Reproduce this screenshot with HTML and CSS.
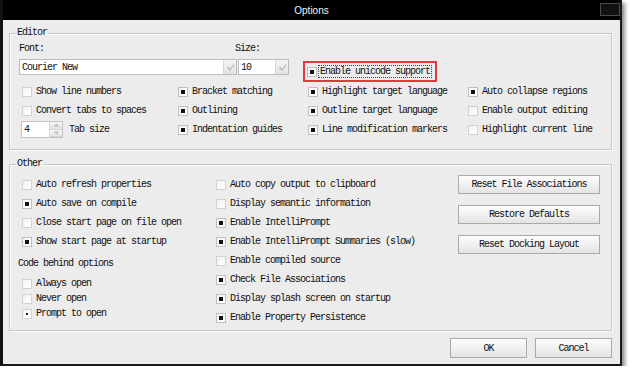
FILE: index.html
```html
<!DOCTYPE html>
<html lang="en">

<head>
    <meta charset="UTF-8">
    <title>Options</title>
    <link rel="stylesheet" href="styles.css">
</head>

<body>
    <div class="window">
        <div class="titlebar">
            <span></span>
            <span class="title">Options</span>
            <span class="close-btn"></span>
        </div>

        <div class="content">
            <fieldset class="group">
                <legend>Editor</legend>
                <div class="editor-body">
                    <div class="top-row">
                        <div class="field font-field">
                            <span class="label">Font:</span>
                            <div class="combo">
                                <span class="combo-text">Courier New</span>
                                <span class="combo-arrow"><svg width="9" height="9" viewBox="0 0 9 9"><polyline points="1.5,4 4,7 8,1.5" fill="none" stroke="#b5b5b5" stroke-width="1.2"/></svg></span>
                            </div>
                        </div>
                        <div class="field size-field">
                            <span class="label size-label">Size:</span>
                            <div class="combo">
                                <span class="combo-text">10</span>
                                <span class="combo-arrow"><svg width="9" height="9" viewBox="0 0 9 9"><polyline points="1.5,4 4,7 8,1.5" fill="none" stroke="#b5b5b5" stroke-width="1.2"/></svg></span>
                            </div>
                        </div>
                        <div class="highlight">
                            <span class="cb on"></span>
                            <span class="focus-text">Enable unicode support</span>
                        </div>
                    </div>

                    <div class="editor-grid">
                        <div class="row"><span class="cb"></span>Show line numbers</div>
                        <div class="row"><span class="cb on"></span>Bracket matching</div>
                        <div class="row"><span class="cb on"></span>Highlight target language</div>
                        <div class="row"><span class="cb on"></span>Auto collapse regions</div>

                        <div class="row"><span class="cb"></span>Convert tabs to spaces</div>
                        <div class="row"><span class="cb on"></span>Outlining</div>
                        <div class="row"><span class="cb on"></span>Outline target language</div>
                        <div class="row"><span class="cb"></span>Enable output editing</div>

                        <div class="row">
                            <div class="spinner">
                                <span class="spin-value">4</span>
                                <span class="spin-btns">
                                    <span class="spin-btn"><svg width="7" height="4" viewBox="0 0 7 4"><polygon points="0.5,3.5 3.5,0.5 6.5,3.5" fill="#bdbdbd"/></svg></span>
                                    <span class="spin-btn"><svg width="7" height="4" viewBox="0 0 7 4"><polygon points="0.5,0.5 3.5,3.5 6.5,0.5" fill="#bdbdbd"/></svg></span>
                                </span>
                            </div>
                            Tab size
                        </div>
                        <div class="row"><span class="cb on"></span>Indentation guides</div>
                        <div class="row"><span class="cb on"></span>Line modification markers</div>
                        <div class="row"><span class="cb"></span>Highlight current line</div>
                    </div>
                </div>
            </fieldset>

            <fieldset class="group other">
                <legend>Other</legend>
                <div class="other-body">
                    <div class="col col-1">
                        <div class="row"><span class="cb"></span>Auto refresh properties</div>
                        <div class="row"><span class="cb on"></span>Auto save on compile</div>
                        <div class="row"><span class="cb"></span>Close start page on file open</div>
                        <div class="row"><span class="cb on"></span>Show start page at startup</div>
                        <div class="subhead">Code behind options</div>
                        <div class="radios">
                            <div class="row small"><span class="cb"></span>Always open</div>
                            <div class="row small"><span class="cb"></span>Never open</div>
                            <div class="row small"><span class="cb dot"></span>Prompt to open</div>
                        </div>
                    </div>
                    <div class="col col-2">
                        <div class="row"><span class="cb"></span>Auto copy output to clipboard</div>
                        <div class="row"><span class="cb"></span>Display semantic information</div>
                        <div class="row"><span class="cb on"></span>Enable IntelliPrompt</div>
                        <div class="row"><span class="cb on"></span>Enable IntelliPrompt Summaries (slow)</div>
                        <div class="row"><span class="cb"></span>Enable compiled source</div>
                        <div class="row"><span class="cb on"></span>Check File Associations</div>
                        <div class="row"><span class="cb on"></span>Display splash screen on startup</div>
                        <div class="row"><span class="cb on"></span>Enable Property Persistence</div>
                    </div>
                    <div class="col col-3">
                        <button class="btn wide">Reset File Associations</button>
                        <button class="btn wide">Restore Defaults</button>
                        <button class="btn wide">Reset Docking Layout</button>
                    </div>
                </div>
            </fieldset>

            <div class="footer">
                <button class="btn dialog">OK</button>
                <button class="btn dialog">Cancel</button>
            </div>
        </div>
    </div>
</body>

</html>
```

FILE: styles.css
```css
body {
    margin: 0;
    background: #fff;
    font-family: "Liberation Mono", monospace;
    font-size: 10px;
    letter-spacing: -1px;
    color: #111;
}

.window {
    width: 622px;
    height: 366px;
    box-sizing: border-box;
    background: #ececec;
    border-left: 3px solid #111;
    border-right: 2px solid #1a1a1a;
    border-bottom: 2px solid #1a1a1a;
    box-shadow: 3px 3px 4px rgba(0, 0, 0, 0.45);
    display: flex;
    flex-direction: column;
}

.titlebar {
    height: 20px;
    flex: none;
    background: #000;
    color: #f2f2f2;
    font-family: "Liberation Sans", sans-serif;
    font-size: 10px;
    letter-spacing: 0;
    display: grid;
    grid-template-columns: 1fr auto 1fr;
    align-items: center;
}

.close-btn {
    justify-self: end;
    width: 18px;
    height: 11px;
    margin-top: -2px;
    border: 1px solid #4a4a4a;
    background: #111;
}

.content {
    padding: 7px 8px 0 6px;
}

/* group boxes */
.group {
    margin: 0;
    padding: 0;
    border: 1px solid #c6c6c6;
    box-shadow: inset 1px 1px 0 #fafafa, 1px 1px 0 #fafafa;
}

.group legend {
    margin-left: 6px;
    padding: 0 1px;
    line-height: 12px;
}

.other {
    margin-top: 8px;
}

.editor-body {
    padding: 4px 0 10px 9px;
}

.top-row {
    display: flex;
}

.field {
    display: flex;
    flex-direction: column;
    gap: 4px;
}

.label {
    line-height: 12px;
}

.font-field {
    width: 218px;
}

.size-field {
    width: 51px;
    margin-left: 1px;
}

.size-label {
    margin-left: -3px;
}

.combo {
    height: 16px;
    box-sizing: border-box;
    background: #fff;
    border: 1px solid #bcbcbc;
    display: flex;
    align-items: center;
    justify-content: space-between;
}

.combo-text {
    padding-left: 2px;
}

.combo-arrow {
    width: 12px;
    height: 14px;
    background: linear-gradient(#f4f4f4, #e2e2e2);
    border-left: 1px solid #d8d8d8;
    display: flex;
    align-items: center;
    justify-content: center;
}

.highlight {
    margin: 18px 0 0 14px;
    width: 134px;
    height: 21px;
    box-sizing: border-box;
    border: 2px solid #e23a3a;
    display: flex;
    align-items: center;
    white-space: nowrap;
}

.highlight .cb {
    margin: 0 2px 0 2px;
}

.focus-text {
    outline: 1px dotted #444;
    padding: 0 1px;
    line-height: 11px;
}

.editor-grid {
    display: grid;
    grid-template-columns: 156px 130px 160px auto;
    grid-auto-rows: 19px;
}

.row {
    display: flex;
    align-items: center;
    white-space: nowrap;
}

/* checkboxes */
.cb {
    width: 10px;
    height: 10px;
    box-sizing: border-box;
    margin: 0 4px 0 3px;
    border: 1px solid #d2d2d2;
    background: linear-gradient(135deg, #f2f2f2, #fff);
    display: flex;
    align-items: center;
    justify-content: center;
    flex: none;
}

.cb.on {
    border-color: #c0c0c0;
}

.cb.on::after {
    content: "";
    width: 4px;
    height: 4px;
    background: #111;
}

.cb.dot::after {
    content: "";
    width: 2px;
    height: 2px;
    background: #222;
}

/* tab size spinner */
.spinner {
    width: 42px;
    height: 17px;
    box-sizing: border-box;
    margin: 0 6px 0 2px;
    background: #fff;
    border: 1px solid #c4c4c4;
    display: flex;
    justify-content: space-between;
    align-items: center;
}

.spin-value {
    padding-left: 2px;
}

.spin-btns {
    display: flex;
    flex-direction: column;
    height: 15px;
    width: 13px;
}

.spin-btn {
    flex: 1;
    background: linear-gradient(#f6f6f6, #e3e3e3);
    border-left: 1px solid #d4d4d4;
    border-bottom: 1px solid #d4d4d4;
    display: flex;
    align-items: center;
    justify-content: center;
}

/* other section */
.other-body {
    display: flex;
    padding: 5px 0 3px 9px;
}

.col {
    display: flex;
    flex-direction: column;
}

.col .row {
    height: 19px;
}

.col .row.small {
    height: 15px;
}

.col-1 {
    width: 194px;
}

.col-2 {
    width: 245px;
}

.subhead {
    margin: 3px 0 0 -1px;
    height: 19px;
    line-height: 19px;
}

.radios {
    margin-top: 3px;
}

.col-3 {
    gap: 11px;
}

.btn {
    font-family: "Liberation Mono", monospace;
    font-size: 10px;
    letter-spacing: -1px;
    color: #111;
    background: linear-gradient(#fdfdfd, #e4e4e4);
    border: 1px solid #aaa;
    border-radius: 0;
    padding: 0;
    cursor: pointer;
}

.wide {
    width: 142px;
    height: 19px;
}

.footer {
    display: flex;
    justify-content: flex-end;
    gap: 8px;
    padding-top: 7px;
}

.dialog {
    width: 77px;
    height: 20px;
}
```
